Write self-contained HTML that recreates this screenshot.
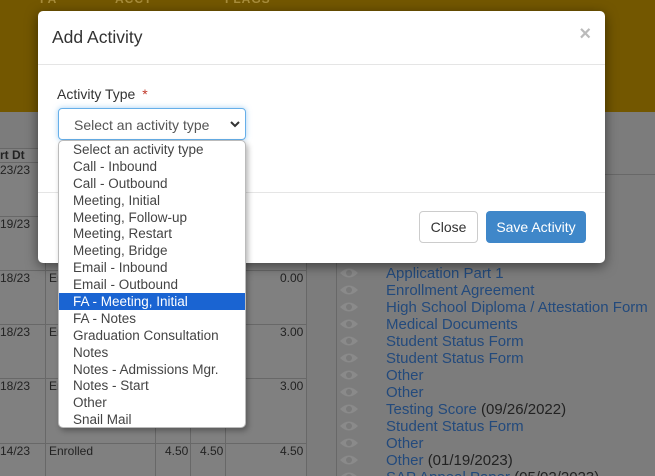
<!DOCTYPE html>
<html><head><meta charset="utf-8"><style>
*{box-sizing:border-box;margin:0;padding:0}
html,body{width:655px;height:476px;overflow:hidden}
body{background:#7c7c7c;font-family:"Liberation Sans",Arial,sans-serif;position:relative}
.a{position:absolute}
.gold{left:0;top:0;width:655px;height:112px;background:#735700}
.hl{background:#686868;height:1px}
.vl{background:#686868;width:1px}
.t{font-size:12px;color:#222;position:absolute}
.lst{position:absolute;left:386px;font-size:15px;color:#234a7c;line-height:17px;white-space:nowrap}
.lst span{color:#222}
.modal{left:38px;top:11px;width:567px;height:252px;background:#fff;border-radius:5px;box-shadow:0 3px 12px rgba(0,0,0,.5)}
.dd{left:58px;top:140px;width:188px;height:288px;background:#fff;border:1px solid #bbb;border-radius:5px;box-shadow:2px 3px 6px rgba(0,0,0,.3);overflow:hidden}
.dd div{height:16.9px;line-height:17px;font-size:13.5px;color:#444;padding-left:14px;white-space:nowrap}
.dd .sel{background:#1a64d2;color:#fff}
</style></head><body>
<div class="a gold"></div>
<div class="a" style="left:40px;top:-8px;font-size:12px;color:#a88d3c;font-weight:bold;letter-spacing:1px">FA</div>
<div class="a" style="left:115px;top:-8px;font-size:12px;color:#a88d3c;font-weight:bold;letter-spacing:1px">ACCT</div>
<div class="a" style="left:225px;top:-8px;font-size:12px;color:#a88d3c;font-weight:bold;letter-spacing:1px">FLAGS</div>
<div class="a" style="left:0;top:148px;width:306px;height:328px;background:#808080"></div>
<div class="a hl" style="left:0;top:148px;width:306px"></div>
<div class="a hl" style="left:0;top:162px;width:306px"></div>
<div class="a hl" style="left:0;top:216px;width:306px"></div>
<div class="a hl" style="left:0;top:270px;width:306px"></div>
<div class="a hl" style="left:0;top:324px;width:306px"></div>
<div class="a hl" style="left:0;top:378px;width:306px"></div>
<div class="a hl" style="left:0;top:443px;width:306px"></div>
<div class="a vl" style="left:45px;top:148px;height:328px"></div>
<div class="a vl" style="left:155px;top:270px;height:206px"></div>
<div class="a vl" style="left:190px;top:270px;height:206px"></div>
<div class="a vl" style="left:225px;top:270px;height:206px"></div>
<div class="a vl" style="left:306px;top:148px;height:328px"></div>
<div class="t" style="left:0;top:148px;font-weight:bold">rt Dt</div>
<div class="t" style="left:0;top:163px">23/23</div>
<div class="t" style="left:0;top:217px">19/23</div>
<div class="t" style="left:0;top:271px">18/23</div><div class="t" style="left:49px;top:271px">En</div><div class="t" style="left:280px;top:271px">0.00</div>
<div class="t" style="left:0;top:325px">18/23</div><div class="t" style="left:49px;top:325px">En</div><div class="t" style="left:280px;top:325px">3.00</div>
<div class="t" style="left:0;top:379px">18/23</div><div class="t" style="left:49px;top:379px">En</div><div class="t" style="left:280px;top:379px">3.00</div>
<div class="t" style="left:0;top:444px">14/23</div><div class="t" style="left:49px;top:444px">Enrolled</div><div class="t" style="left:165px;top:444px">4.50</div><div class="t" style="left:200px;top:444px">4.50</div><div class="t" style="left:280px;top:444px">4.50</div>
<div class="a vl" style="left:336px;top:112px;height:364px"></div>
<div class="a hl" style="left:336px;top:174px;width:319px"></div>
<div class="lst" style="top:265px">Application Part 1<br>Enrollment Agreement<br>High School Diploma / Attestation Form<br>Medical Documents<br>Student Status Form<br>Student Status Form<br>Other<br>Other<br>Testing Score <span>(09/26/2022)</span><br>Student Status Form<br>Other<br>Other <span>(01/19/2023)</span><br>SAP Appeal Paper <span>(05/02/2023)</span></div>
<svg class="a" style="left:338px;top:265px" width="22" height="211">
<defs><g id="e"><path d="M2 8 Q11 -1 20 8 Q11 17 2 8Z" fill="#8a8a8a"/><circle cx="11" cy="8" r="3" fill="#7a7a7a"/></g></defs>
<use href="#e" y="0"/><use href="#e" y="17"/><use href="#e" y="34"/><use href="#e" y="51"/><use href="#e" y="68"/><use href="#e" y="85"/><use href="#e" y="102"/><use href="#e" y="119"/><use href="#e" y="136"/><use href="#e" y="153"/><use href="#e" y="170"/><use href="#e" y="187"/><use href="#e" y="204"/>
</svg>
<div class="a modal">
 <div class="a" style="left:14px;top:16px;font-size:17.5px;color:#333">Add Activity</div>
 <div class="a" style="right:14px;top:12px;font-size:20px;color:#bbb;font-weight:bold">×</div>
 <div class="a" style="left:0;top:53px;width:567px;height:1px;background:#e5e5e5"></div>
 <div class="a" style="left:19px;top:75px;font-size:14px;color:#333">Activity Type <span style="color:#c0392b;margin-left:3px">*</span></div>
 <div class="a" style="left:20px;top:97px;width:188px;height:32px;border:1px solid #66afe9;border-radius:4px;box-shadow:0 0 6px rgba(102,175,233,.6);font-size:14px;color:#555;padding:8px 0 0 15px">Select an activity type
  <svg style="position:absolute;right:5px;top:12px" width="10" height="7"><path d="M1 1 L5 5 L9 1" fill="none" stroke="#333" stroke-width="2"/></svg></div>
 <div class="a" style="left:0;top:181px;width:567px;height:1px;background:#e5e5e5"></div>
 <div class="a" style="left:381px;top:200px;width:59px;height:32px;border:1px solid #ccc;border-radius:4px;font-size:14px;color:#333;text-align:center;line-height:30px">Close</div>
 <div class="a" style="left:448px;top:200px;width:100px;height:32px;background:#3f87c9;border-radius:4px;font-size:14px;color:#fff;text-align:center;line-height:32px">Save Activity</div>
</div>
<div class="a dd">
<div>Select an activity type</div><div>Call - Inbound</div><div>Call - Outbound</div><div>Meeting, Initial</div><div>Meeting, Follow-up</div><div>Meeting, Restart</div><div>Meeting, Bridge</div><div>Email - Inbound</div><div>Email - Outbound</div><div class="sel">FA - Meeting, Initial</div><div>FA - Notes</div><div>Graduation Consultation</div><div>Notes</div><div>Notes - Admissions Mgr.</div><div>Notes - Start</div><div>Other</div><div>Snail Mail</div>
</div>
</body></html>
